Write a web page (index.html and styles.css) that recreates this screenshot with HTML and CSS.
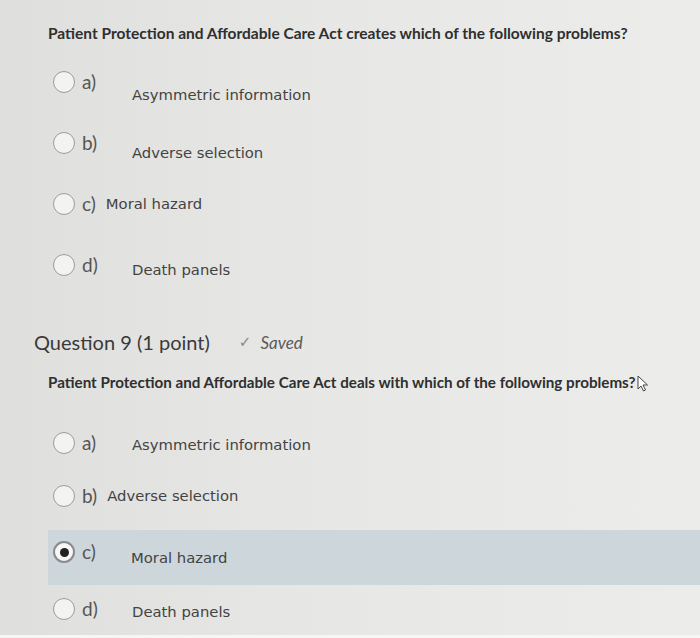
FILE: index.html
```html
<!DOCTYPE html>
<html>
<head>
<meta charset="utf-8">
<link rel="stylesheet" href="styles.css">
</head>
<body>
<div class="page">
  <section class="q q1">
    <p class="qtext">Patient Protection and Affordable Care Act creates which of the following problems?</p>
    <div class="opts">
      <div class="opt opt-a1"><span class="radio"></span><span class="label">a)</span><span class="text">Asymmetric information</span></div>
      <div class="opt opt-b1"><span class="radio"></span><span class="label">b)</span><span class="text">Adverse selection</span></div>
      <div class="opt opt-c1 inline"><span class="radio"></span><span class="label">c)</span><span class="text">Moral hazard</span></div>
      <div class="opt opt-d1"><span class="radio"></span><span class="label">d)</span><span class="text">Death panels</span></div>
    </div>
  </section>
  <section class="q q2">
    <div class="qhead"><span class="qtitle">Question 9 <span class="pts">(1 point)</span></span><span class="saved"><span class="check">✓</span><span class="saved-text">Saved</span></span></div>
    <p class="qtext">Patient Protection and Affordable Care Act deals with which of the following problems?<svg class="cursor" width="12" height="17" viewBox="0 0 12 17"><path d="M1 1 L1 14 L4 11 L6.5 16 L8.5 15 L6 10 L10.5 10 Z" fill="#fff" stroke="#444" stroke-width="1"/></svg></p>
    <div class="opts">
      <div class="opt opt-a2"><span class="radio"></span><span class="label">a)</span><span class="text">Asymmetric information</span></div>
      <div class="opt opt-b2 inline"><span class="radio"></span><span class="label">b)</span><span class="text">Adverse selection</span></div>
      <div class="opt opt-c2 selected"><span class="radio checked"></span><span class="label">c)</span><span class="text">Moral hazard</span></div>
      <div class="opt opt-d2"><span class="radio"></span><span class="label">d)</span><span class="text">Death panels</span></div>
    </div>
  </section>
</div>
</body>
</html>
```
FILE: styles.css
```css
html, body {
  margin: 0;
  padding: 0;
}
body {
  width: 700px;
  height: 638px;
  overflow: hidden;
  background: linear-gradient(90deg, #dfdfdd 0%, #e7e7e5 45%, #ececea 100%);
}
.page {
  height: 635px;
  border-bottom: 3px solid #f6f6f5;
  display: flex;
  flex-direction: column;
}
.qtext {
  margin: 0;
  padding-left: 48px;
  font-family: Lato, "Liberation Sans", sans-serif;
  font-weight: 700;
  font-size: 15.5px;
  line-height: 20px;
  color: #2f2f2f;
  display: flex;
  align-items: center;
}
.q1 .qtext {
  margin-top: 23px;
}
.q2 .qtext {
  margin-top: 17px;
  font-size: 15.2px;
}
.opts {
  display: flex;
  flex-direction: column;
}
.q1 .opts {
  margin-top: 28px;
}
.opt {
  display: flex;
  align-items: flex-start;
  padding-left: 53px;
}
.q1 .opt {
  height: 61px;
}
.radio {
  width: 22px;
  height: 22px;
  box-sizing: border-box;
  border-radius: 50%;
  border: 1.5px solid #9c9c9c;
  background: #f3f3f2;
  margin-right: 7px;
  flex: none;
  display: flex;
  align-items: center;
  justify-content: center;
}
.radio.checked {
  border: 2px solid #8a8a8a;
  background: #f7f7f7;
}
.radio.checked::after {
  content: "";
  width: 9px;
  height: 9px;
  border-radius: 50%;
  background: #222;
}
.label {
  width: 50px;
  font-family: Lato, "Liberation Sans", sans-serif;
  font-size: 19px;
  line-height: 22px;
  color: #555;
}
.text {
  font-family: "DejaVu Sans", Verdana, sans-serif;
  font-size: 14.8px;
  line-height: 22px;
  color: #434343;
}
.opt-a1 .text {
  padding-top: 13px;
}
.opt-b1 .text {
  padding-top: 10px;
}
.opt-d1 .text {
  padding-top: 5px;
}
.opt.inline .label {
  width: auto;
  margin-right: 10px;
}
.opt.inline .text {
  padding-top: 0;
}
.qhead {
  margin-top: 14px;
  padding-left: 34px;
  height: 26px;
  display: flex;
  align-items: center;
}
.qtitle {
  font-family: Lato, "Liberation Sans", sans-serif;
  font-size: 20px;
  color: #3a3a3a;
}
.saved {
  margin-left: 29px;
  display: flex;
  align-items: center;
  color: #5a5a5a;
}
.check {
  font-family: "DejaVu Sans", sans-serif;
  font-size: 15px;
  color: #8a8a8a;
  margin-right: 9px;
}
.saved-text {
  font-family: Lato, "Liberation Sans", sans-serif;
  font-style: italic;
  font-size: 17px;
}
.cursor {
  margin-left: 1px;
  margin-top: 2px;
}
.q2 .opts {
  margin-top: 40px;
}
.opt-a2 {
  height: 53px;
}
.opt-a2 .text {
  padding-top: 2px;
}
.opt-b2 {
  height: 45px;
}
.opt-c2 {
  margin-left: 48px;
  padding-left: 5px;
  padding-top: 11px;
  height: 44px;
  background: #cdd6da;
}
.opt-c2 .label {
  width: 49px;
}
.opt-c2 .text {
  padding-top: 6px;
}
.opt-d2 {
  padding-top: 13px;
}
.opt-d2 .text {
  padding-top: 3px;
}
```
